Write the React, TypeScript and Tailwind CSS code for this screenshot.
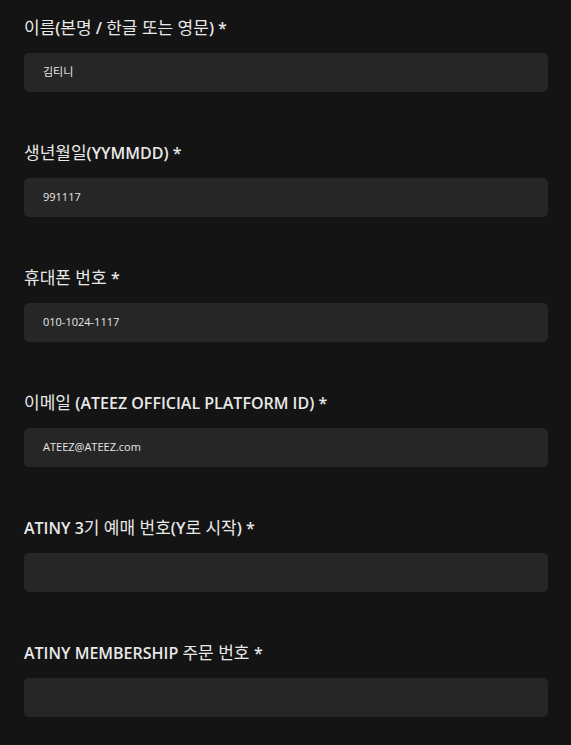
const fields = [
  { label: [['이름', false], ['(', true], ['본명', false], [' / ', true], ['한글 또는 영문', false], [') *', true]], value: '김티니' },
  { label: [['생년월일', false], ['(YYMMDD) *', true]], value: '991117' },
  { label: [['휴대폰 번호 ', false], ['*', true]], value: '010-1024-1117' },
  { label: [['이메일 ', false], ['(ATEEZ OFFICIAL PLATFORM ID) *', true]], value: 'ATEEZ@ATEEZ.com' },
  { label: [['ATINY 3', true], ['기 예매 번호', false], ['(Y', true], ['로 시작', false], [') *', true]], value: '' },
  { label: [['ATINY MEMBERSHIP ', true], ['주문 번호 ', false], ['*', true]], value: '' },
] as { label: [string, boolean][]; value: string }[];

export default function App() {
  return (
    <div className="min-h-[745px] w-full bg-[#141414] pl-6 pr-[23px] pt-4 font-['Open_Sans','Noto_Sans_CJK_KR',sans-serif]">
      {fields.map((f, i) => (
        <div key={i} className="mb-[49px]">
          <div className="mb-[13px] h-6 leading-6 text-[#e8e8e8]">
            {f.label.map(([t, bold], j) => (
              <span key={j} className={bold ? 'text-[16px] font-semibold' : 'text-[17px] font-normal'}>
                {t}
              </span>
            ))}
          </div>
          <div className="flex h-[39px] items-center rounded-[5px] bg-[#262626] pl-[19px] text-[11px] text-[#e6e6e6]">
            {f.value}
          </div>
        </div>
      ))}
    </div>
  );
}
